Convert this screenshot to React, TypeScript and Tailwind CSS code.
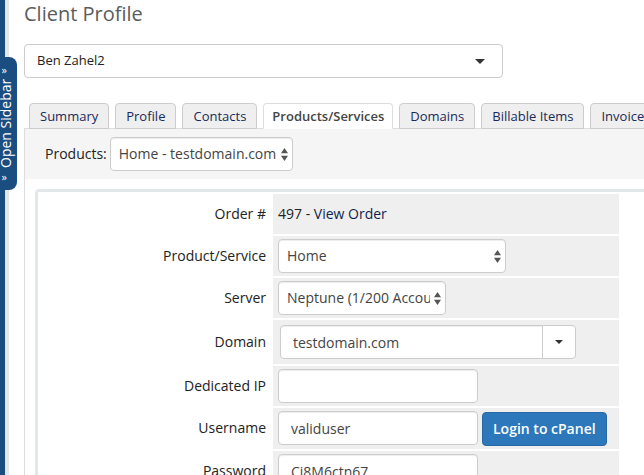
import type { ReactNode } from "react";
import clsx from "clsx";

const tabs = [
  "Summary",
  "Profile",
  "Contacts",
  "Products/Services",
  "Domains",
  "Billable Items",
  "Invoices",
];

const fieldStyle =
  "h-[34px] rounded border border-[#ccc] bg-white text-[14px] text-[#444] shadow-[inset_0_1px_1px_rgba(0,0,0,0.075)]";

type SelectProps = {
  id: string;
  option: string;
  className: string;
};

const Select = ({ id, option, className }: SelectProps) => (
  <span className={clsx("relative block", className)}>
    <select
      id={id}
      className={clsx(
        fieldStyle,
        "block w-full appearance-none pb-[2px] pl-2 pr-[15px]"
      )}
    >
      <option>{option}</option>
    </select>
    <svg
      viewBox="0 0 7 13"
      className="pointer-events-none absolute right-[5px] top-[11px] h-[13px] w-[7px] fill-[#555]"
    >
      <path d="M3.5 0 7 5.3H0zM3.5 13 0 7.7h7z" />
    </svg>
  </span>
);

type RowProps = {
  label: string;
  htmlFor?: string;
  children: ReactNode;
};

const Row = ({ label, htmlFor, children }: RowProps) => (
  <tr>
    <th
      scope="row"
      className="w-[231px] pb-[2px] pr-[5px] text-right align-middle font-normal"
    >
      <label htmlFor={htmlFor}>{label}</label>
    </th>
    <td className="h-10 w-[346px] bg-[#efefef] px-[5px] py-[3px]">
      {children}
    </td>
    <td></td>
  </tr>
);

const Caret = ({ className }: { className?: string }) => (
  <svg viewBox="0 0 10 5" className={clsx("fill-[#333]", className)}>
    <path d="M0 0h10L5 5z" />
  </svg>
);

// the whole handle is turned upside down, so the chevrons are turned back
const Chevron = () => (
  <span className="rotate-180 pr-1 text-[11px] [writing-mode:horizontal-tb]">
    »
  </span>
);

const SidebarHandle = () => (
  <button
    type="button"
    className="absolute left-0 top-[57px] flex h-[133px] w-[17px] rotate-180 items-center justify-center gap-[3px] rounded-l-lg bg-[#1a4d80] pl-[5px] text-[14px] leading-3 text-white [writing-mode:vertical-rl]"
  >
    <Chevron />
    <span>Open Sidebar</span>
    <Chevron />
  </button>
);

const App = () => {
  return (
    <div className="relative flex h-screen overflow-hidden bg-white font-['Open_Sans','Noto_Sans',sans-serif] text-[14px] text-[#222]">
      <div className="w-[9px] shrink-0 border-r-4 border-[#e2e7e9] bg-[#1a4d80]" />
      <SidebarHandle />

      <main className="min-w-0 flex-1 pl-[15px]">
        <h1 className="pb-4 text-[20px] leading-7 text-[#5c5c5c]">
          Client Profile
        </h1>

        <button
          type="button"
          className="flex h-[34px] w-[479px] items-center justify-between rounded border border-[#ccc] bg-white pl-3 pr-[17px] text-[13px]"
        >
          Ben Zahel2
          <Caret className="h-[5px] w-[10px]" />
        </button>

        <nav className="relative mt-[25px] flex gap-[6px] overflow-hidden pl-[5px]">
          {tabs.map((tab) => (
            <a
              key={tab}
              href="#"
              className={clsx(
                "h-[26px] shrink-0 rounded-t border text-[13px] leading-6",
                tab === "Products/Services"
                  ? "border-[#ddd] border-b-transparent bg-white px-2 font-semibold text-[#444]"
                  : "border-[#ccc] bg-[#efefef] px-[10px] text-[#1a2a5a]"
              )}
            >
              {tab}
            </a>
          ))}
        </nav>

        <div className="-mt-px border-l border-t border-[#ddd]">
          <div className="flex h-[50px] items-center gap-[3px] bg-[#f5f5f5] pl-5">
            <label htmlFor="products" className="pb-[2px]">
              Products:
            </label>
            <Select
              id="products"
              option="Home - testdomain.com"
              className="w-[183px]"
            />
          </div>

          <div className="ml-[10px] mt-[10px] rounded-tl border-l-3 border-t-3 border-[#e2e7e9]">
            <table className="w-full table-fixed border-separate border-spacing-[2px]">
              <tbody>
                <Row label="Order #">
                  <p className="pb-[2px]">
                    497 -{" "}
                    <a href="#" className="text-[#0f1f50]">
                      View Order
                    </a>
                  </p>
                </Row>
                <Row label="Product/Service" htmlFor="product">
                  <Select id="product" option="Home" className="w-[228px]" />
                </Row>
                <Row label="Server" htmlFor="server">
                  <Select
                    id="server"
                    option="Neptune (1/200 Accounts)"
                    className="w-[168px]"
                  />
                </Row>
                <Row label="Domain" htmlFor="domain">
                  <div className="flex p-[2px]">
                    <input
                      id="domain"
                      defaultValue="testdomain.com"
                      className={clsx(fieldStyle, "w-[263px] rounded-r-none px-3")}
                    />
                    <button
                      type="button"
                      aria-label="Domain options"
                      className="-ml-px flex h-[34px] w-[34px] items-center justify-center rounded-r border border-[#ccc] bg-white"
                    >
                      <Caret className="h-1 w-2" />
                    </button>
                  </div>
                </Row>
                <Row label="Dedicated IP" htmlFor="dedicated-ip">
                  <input
                    id="dedicated-ip"
                    className={clsx(fieldStyle, "block w-[200px] px-3")}
                  />
                </Row>
                <Row label="Username" htmlFor="username">
                  <div className="flex gap-1">
                    <input
                      id="username"
                      defaultValue="validuser"
                      className={clsx(fieldStyle, "w-[200px] px-3")}
                    />
                    <button
                      type="button"
                      className="mt-px h-[34px] rounded border border-[#2868a5] bg-[#2d78bb] px-[10px] pb-px font-semibold text-white"
                    >
                      Login to cPanel
                    </button>
                  </div>
                </Row>
                <Row label="Password" htmlFor="password">
                  <input
                    id="password"
                    defaultValue="Cj8M6ctn67"
                    className={clsx(fieldStyle, "block w-[200px] px-3")}
                  />
                </Row>
              </tbody>
            </table>
          </div>
        </div>
      </main>
    </div>
  );
};

export default App;
